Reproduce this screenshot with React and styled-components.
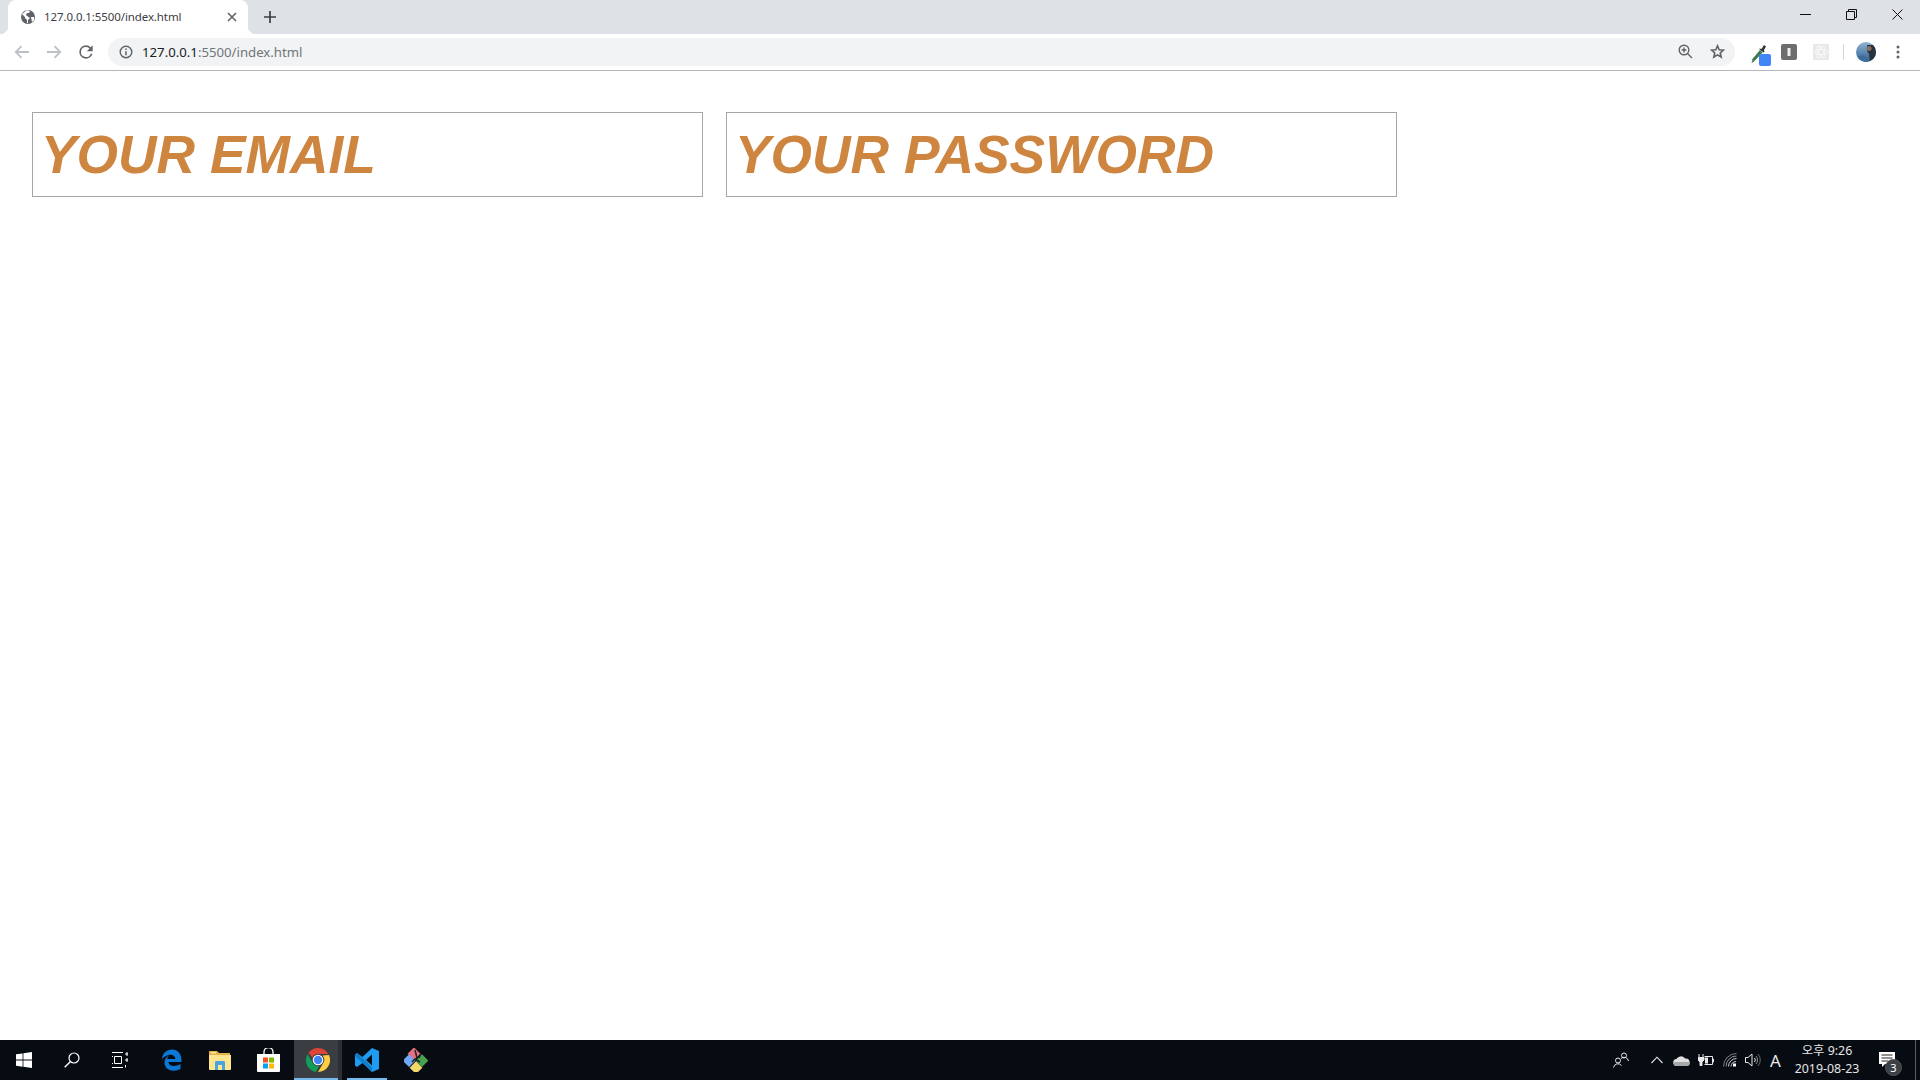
import React from "react";
import styled, { createGlobalStyle } from "styled-components";

const Global = createGlobalStyle`
  html, body { margin: 0; padding: 0; height: 100%; background: #fff; }
  #root { height: 100%; }
  * { box-sizing: border-box; }
`;
const Page = styled.div`
  width: 100%; height: 100vh; display: flex; flex-direction: column; overflow: hidden;
  font-family: "Noto Sans", "Noto Sans CJK KR", sans-serif;
`;
const TabStrip = styled.div`
  height: 34px; flex: none; background: #dee1e6; display: flex; align-items: flex-end; padding-left: 8px;
`;
const Tab = styled.div`
  position: relative; width: 240px; height: 34px; background: #fff; border-radius: 8px 8px 0 0;
  display: flex; align-items: center; padding: 0 11px 0 12px; gap: 8px;
  &::before, &::after { content: ""; position: absolute; bottom: 0; width: 8px; height: 8px; }
  &::before { left: -8px; background: radial-gradient(circle at 0 0, transparent 8px, #fff 8.5px); }
  &::after { right: -8px; background: radial-gradient(circle at 100% 0, transparent 8px, #fff 8.5px); }
`;
const TabTitle = styled.span`
  flex: 1; font-size: 11.5px; line-height: 16px; color: #3c4043; white-space: nowrap; letter-spacing: -0.1px;
`;
const NewTab = styled.div`
  width: 28px; height: 28px; margin-left: 8px; margin-bottom: 3px; display: flex; align-items: center; justify-content: center;
`;
const WindowControls = styled.div`
  margin-left: auto; align-self: flex-start; display: flex;
`;
const WinButton = styled.div`
  width: 46px; height: 29px; display: flex; align-items: center; justify-content: center;
`;
const Toolbar = styled.div`
  height: 37px; flex: none; background: #fff; border-bottom: 1px solid #b6b6b6; display: flex; align-items: center;
  padding: 0 6px 1px 6px;
`;
const NavButton = styled.div`
  width: 32px; height: 28px; display: flex; align-items: center; justify-content: center; flex: none;
`;
const Omnibox = styled.div`
  width: 1627px; height: 28px; margin-left: 6px; border-radius: 14px; background: #f1f3f4; display: flex; align-items: center;
  padding: 0 2px 0 11px; flex: none;
`;
const UrlText = styled.div`
  margin-left: 9px; font-size: 13.2px; color: #70757a; flex: 1; white-space: nowrap;
  b { font-weight: 400; color: #202124; }
`;
const OmniIcon = styled.div`
  width: 32px; height: 24px; display: flex; align-items: center; justify-content: center;
`;
const Extensions = styled.div`
  display: flex; align-items: center; flex: 1; margin-left: 6px;
`;
const ExtButton = styled.div`
  width: 32px; height: 28px; display: flex; flex: none;
  align-items: ${p => (p.$badged ? "flex-end" : "center")};
  justify-content: ${p => (p.$badged ? "flex-end" : "center")};
  padding-right: ${p => (p.$badged ? 2 : 0)}px;
`;
const Divider = styled.div`
  width: 1px; height: 16px; background: #d5d7da; margin: 0 6px;
`;
const Content = styled.main`
  flex: 1; padding: 41px 32px 0; display: flex; align-items: flex-start; gap: 23px; background: #fff;
`;
const Field = styled.input`
  width: 671px; height: 85px; border: 1px solid #a6a6a6; background: #fff; padding: 0 8px; margin: 0; outline: none;
  font: italic 700 53.33px "Liberation Sans", Arial, sans-serif; color: #cd853f;
  &::placeholder { color: #cd853f; opacity: 1; }
`;
const Taskbar = styled.footer`
  height: 40px; flex: none; background: #070b12; display: flex; align-items: stretch; color: #e8e8e8;
`;
const TaskGroup = styled.div`
  display: flex; margin-left: ${p => p.$gap || 0}px; gap: ${p => p.$inner || 0}px;
`;
const TaskButton = styled.div`
  position: relative; width: 48px; height: 40px; display: flex; align-items: center; justify-content: center;
  background: ${p => (p.$active ? "linear-gradient(90deg, #3a3d42 44px, #2b2e33 44px)" : "transparent")};
  &::after {
    content: ""; position: absolute; bottom: 0; height: 2px; background: #76b9ed;
    display: ${p => (p.$open ? "block" : "none")};
    left: ${p => (p.$active ? 0 : 4)}px; right: 4px;
  }
`;
const Tray = styled.div`
  margin-left: auto; display: flex; align-items: center;
`;
const TrayIcon = styled.div`
  width: ${p => p.$w}px; height: 40px; display: flex; align-items: center; justify-content: center; flex: none;
`;
const ImeLetter = styled.span`
  font-size: 17px; font-family: "Noto Sans", sans-serif; color: #e6e6e6;
`;
const Clock = styled.div`
  width: 80px; text-align: center; font-size: 12.4px; line-height: 18px; color: #e6e6e6; white-space: nowrap;
`;
const Notify = styled.div`
  position: relative; width: 48px; height: 40px; display: flex; align-items: center; justify-content: center; padding: 0 8px 2px 0;
`;
const NotifyBadge = styled.span`
  position: absolute; left: 18px; top: 19px; width: 17px; height: 17px; border-radius: 50%;
  background: #3c3f44; border: 1px solid #555; color: #fff; font-size: 11px; line-height: 15px; text-align: center;
`;
const ShowDesktop = styled.div`
  width: 5px; border-left: 1px solid #5a5d62; height: 40px; flex: none;
`;

const Globe = () => (
  <svg width="16" height="16" viewBox="0 0 16 16">
    <circle cx="8" cy="8" r="7" fill="#5f6368" />
    <path d="M2 5l3 3 0 1 2 2 0 3 1 0 0-3 2-2 -3-2 -1-1 1-2 2 0 1-2 -3-1z M11 8l3 0 0 3 -2 2z" fill="#fff" />
  </svg>
);
const CloseX = () => (
  <svg width="10" height="10" viewBox="0 0 10 10"><path d="M1 1l8 8M9 1l-8 8" stroke="#5f6368" strokeWidth="1.6" /></svg>
);
const Plus = () => (
  <svg width="12" height="12" viewBox="0 0 12 12"><path d="M6 0v12M0 6h12" stroke="#3c4043" strokeWidth="1.7" /></svg>
);
const Arrow = ({ flip }) => (
  <svg width="16" height="14" viewBox="0 0 16 14" style={flip ? { transform: "scaleX(-1)" } : undefined}>
    <path d="M15 7H2M7.5 1.2L1.8 7l5.7 5.8" fill="none" stroke="#bdc1c6" strokeWidth="1.8" />
  </svg>
);
const Reload = () => (
  <svg width="20" height="20" viewBox="0 0 24 24">
    <path fill="#5f6368" d="M17.65 6.35A7.96 7.96 0 0 0 12 4a8 8 0 1 0 7.73 10h-2.08A6 6 0 1 1 12 6c1.66 0 3.14.69 4.22 1.78L13 11h7V4z" />
  </svg>
);
const Info = () => (
  <svg width="14" height="14" viewBox="0 0 14 14">
    <circle cx="7" cy="7" r="5.8" fill="none" stroke="#5f6368" strokeWidth="1.4" />
    <path d="M7 6.2v4M7 3.6v1.5" stroke="#5f6368" strokeWidth="1.5" />
  </svg>
);
const Zoom = () => (
  <svg width="15" height="15" viewBox="0 0 15 15">
    <circle cx="6" cy="6" r="4.8" fill="none" stroke="#5f6368" strokeWidth="1.4" />
    <path d="M9.5 9.5l4.5 4.5M3.6 6h4.8M6 3.6v4.8" stroke="#5f6368" strokeWidth="1.4" />
  </svg>
);
const Star = () => (
  <svg width="15" height="15" viewBox="0 0 24 24">
    <path fill="none" stroke="#5f6368" strokeWidth="2.6" d="M12 3l2.7 6.2 6.8.6-5.1 4.5 1.5 6.6L12 17.4 6.1 20.9l1.5-6.6L2.500 9.800l6.800-.6z" />
  </svg>
);
const Dropper = () => (
  <svg width="20" height="22" viewBox="0 0 20 22">
    <path d="M1 15.500L9 6l2.500 2.500L3 17.500z" fill="#3c7a4a" />
    <path d="M.5 19l1-3 1.500 1.500z" fill="#2f6b3c" />
    <path d="M8.500 4.500l2 .5 2.500-4 2 1.500-2 3.500 .5 2-1 .5-4-3z" fill="#333" />
    <rect x="8" y="10" width="12" height="12" rx="2" fill="#4285f4" />
  </svg>
);
const GrayExt = () => (
  <svg width="16" height="16" viewBox="0 0 16 16">
    <rect width="16" height="16" rx="2" fill="#6d6d6d" />
    <rect x="6.500" y="4" width="3" height="8" fill="#eee" />
  </svg>
);
const AtomExt = () => (
  <svg width="16" height="16" viewBox="0 0 16 16">
    <rect width="16" height="16" fill="#e8e8e8" />
    <g fill="none" stroke="#f8f8f8" strokeWidth="1">
      <ellipse cx="8" cy="8" rx="6.500" ry="2.600" />
      <ellipse cx="8" cy="8" rx="6.500" ry="2.600" transform="rotate(60 8 8)" />
      <ellipse cx="8" cy="8" rx="6.500" ry="2.600" transform="rotate(120 8 8)" />
    </g>
  </svg>
);
const Avatar = () => (
  <svg width="20" height="20" viewBox="0 0 20 20">
    <defs>
      <linearGradient id="av" x1="0" y1="0" x2="0" y2="1">
        <stop offset="0" stopColor="#8fb4d6" />
        <stop offset="1" stopColor="#2f5f8f" />
      </linearGradient>
      <clipPath id="avc"><circle cx="10" cy="10" r="10" /></clipPath>
    </defs>
    <g clipPath="url(#avc)">
      <rect width="20" height="20" fill="url(#av)" />
      <path d="M11 3h9v17h-6l-1-8-2-3z" fill="#26323d" />
      <circle cx="13" cy="6.500" r="2.500" fill="#8a6f5f" />
      <path d="M0 15l8-2 6 7H0z" fill="#3e6c9a" />
    </g>
  </svg>
);
const Dots = () => (
  <svg width="4" height="14" viewBox="0 0 4 14">
    <circle cx="2" cy="2" r="1.500" fill="#5f6368" /><circle cx="2" cy="7" r="1.500" fill="#5f6368" /><circle cx="2" cy="12" r="1.500" fill="#5f6368" />
  </svg>
);
const WinMin = () => <svg width="11" height="11" viewBox="0 0 11 11"><path d="M0 5.500h11" stroke="#111" /></svg>;
const WinRestore = () => (
  <svg width="11" height="11" viewBox="0 0 11 11"><path d="M.5 2.500h8v8h-8zM2.500 2.500v-2h8v8h-2" fill="none" stroke="#111" /></svg>
);
const WinClose = () => <svg width="11" height="11" viewBox="0 0 11 11"><path d="M.5.500l10 10M10.500.500l-10 10" stroke="#111" /></svg>;

const WindowsLogo = () => (
  <svg width="16" height="16" viewBox="0 0 16 16"><path fill="#fff" d="M0 2.300l6.600-.9v6.200H0zM7.400 1.300L16 0v7.600H7.400zM0 8.400h6.600v6.300L0 13.800zM7.400 8.400H16V16l-8.600-1.200z" /></svg>
);
const SearchIcon = () => (
  <svg width="16" height="16" viewBox="0 0 16 16"><circle cx="10" cy="6" r="5" fill="none" stroke="#fff" strokeWidth="1.200" /><path d="M6.500 9.500L.7 15.300" stroke="#fff" strokeWidth="1.400" /></svg>
);
const TaskView = () => (
  <svg width="16" height="16" viewBox="0 0 16 16" fill="none" stroke="#fff">
    <path d="M0 .5h11M0 15.500h11M2.500 4.500h7v7h-7z" />
    <path d="M0 4.500h1M0 11.500h1M11 4.500h0M14 1h2v2h-2zM14 7h2v2h-2z" />
    <path d="M13.500 13v2.500" />
  </svg>
);
const EdgeIcon = () => (
  <svg width="21" height="22" viewBox="0 0 21 22">
    <path fill="#0a78d4" d="M1 10C1.500 4 6 .5 11 .5c6 0 9.500 4.500 9.500 11v1.500H7.500c.3 4 6 5.500 12 2v5c-7 3.500-16 1.500-16-6.500 0-3 1.500-5.500 4.500-7-1.200 1.200-1.500 2.300-1.700 3.500h8c0-5-7-6.500-13.800.5z" />
  </svg>
);
const ExplorerIcon = () => (
  <svg width="22" height="20" viewBox="0 0 22 20">
    <path fill="#e3b34a" d="M0 1h8l2 2h11v15H0z" />
    <path fill="#fde68f" d="M0 5h22v14a1 1 0 0 1-1 1H1a1 1 0 0 1-1-1z" />
    <path fill="#4aa4e0" d="M6 19v-7a1 1 0 0 1 1-1h8a1 1 0 0 1 1 1v8h-3v-5H9v5H6z" />
    <rect x="2" y="2" width="5" height="1.500" fill="#fbe89c" />
  </svg>
);
const StoreIcon = () => (
  <svg width="23" height="24" viewBox="0 0 23 24">
    <path d="M7 6V4a4.500 4.500 0 0 1 9 0v2" fill="none" stroke="#fff" strokeWidth="1.300" />
    <path fill="#fff" d="M0 6h23v17a1 1 0 0 1-1 1H1a1 1 0 0 1-1-1z" />
    <rect x="6" y="9.500" width="5" height="5" fill="#f25022" />
    <rect x="12" y="9.500" width="5" height="5" fill="#7fba00" />
    <rect x="6" y="15.500" width="5" height="5" fill="#00a4ef" />
    <rect x="12" y="15.500" width="5" height="5" fill="#ffb900" />
  </svg>
);
const ChromeIcon = () => (
  <svg width="24" height="24" viewBox="0 0 24 24">
    <path fill="#db4437" d="M12 0a12 12 0 0 1 10.400 6H12a6 6 0 0 0-5.600 3.700L2.500 4.700A12 12 0 0 1 12 0z" />
    <path fill="#0f9d58" d="M1.600 6l5 8.700A6 6 0 0 0 13 17.900L10 24A12 12 0 0 1 1.600 6z" />
    <path fill="#ffcd40" d="M23 7a12 12 0 0 1-11 17l5.200-9a6 6 0 0 0-.8-7.500z" />
    <circle cx="12" cy="12" r="5.300" fill="#fff" />
    <circle cx="12" cy="12" r="4.200" fill="#4285f4" />
  </svg>
);
const VSCodeIcon = () => (
  <svg width="24" height="24" viewBox="0 0 24 24">
    <path fill="#1f9cf0" d="M17 0l7 3v18l-7 3-9.500-9L2 19 0 17.500v-11L2 5l5.500 4zm0 6.500L11 12l6 5.500z" />
    <path fill="#0b6fb5" d="M17 0L2 13.500l0 0L7.500 9 17 0zM0 6.500L2 5l15 14v5L0 8z" opacity=".7" />
  </svg>
);
const GitKrakenIcon = () => (
  <svg width="24" height="24" viewBox="0 0 24 24">
    <rect x="6" y="1" width="9" height="9" transform="rotate(45 10 5)" fill="#e8707e" />
    <rect x="1" y="8" width="9" height="9" transform="rotate(45 5 12)" fill="#6fa8f5" />
    <rect x="14" y="8" width="9" height="9" transform="rotate(45 18 12)" fill="#47a24f" />
    <rect x="8" y="15" width="9" height="9" transform="rotate(45 12 19)" fill="#f3d869" />
    <path d="M11 2l2 8M17 5l-2 5M8 14l3-3 5 3" stroke="#20242a" strokeWidth="1.500" fill="none" />
  </svg>
);
const PeopleIcon = () => (
  <svg width="16" height="16" viewBox="0 0 16 16" fill="none" stroke="#e8e8e8">
    <circle cx="5" cy="8.500" r="2.500" /><path d="M.5 15.500a4.500 4.500 0 0 1 8 -2" />
    <circle cx="11" cy="3.500" r="2.500" /><path d="M8 6.500a4.500 4.500 0 0 1 7.500 2.500" />
  </svg>
);
const Chevron = () => <svg width="12" height="8" viewBox="0 0 12 8"><path d="M.5 7L6 1.200 11.500 7" fill="none" stroke="#e8e8e8" strokeWidth="1.100" /></svg>;
const Cloud = () => (
  <svg width="17" height="11" viewBox="0 0 17 11">
    <path fill="#e0e0e0" d="M4 11a3.500 3.500 0 0 1-.5-7A5 5 0 0 1 12 3.500 3.700 3.700 0 0 1 13.500 11z" />
    <path fill="#a8a8a8" d="M0 7h17c.2 2.500-1.200 4-3.500 4H4C2 11 .3 9.500 0 7z" />
  </svg>
);
const Battery = () => (
  <svg width="16" height="12" viewBox="0 0 16 12" fill="none" stroke="#e8e8e8">
    <path d="M6.500 2.500h8v8h-8M14.500 5h1v3h-1" />
    <path d="M1 0v3M5 0v3M0 3.500h6v2.500l-2 2v3.500h-2V8L0 6z" fill="#e8e8e8" />
    <rect x="7" y="3.500" width="3" height="6" fill="#e8e8e8" stroke="none" />
  </svg>
);
const Wifi = () => (
  <svg width="14" height="14" viewBox="0 0 14 14" fill="none" stroke="#d0d0d0">
    <path d="M.5 13.500A13 13 0 0 1 13.500.500" strokeOpacity=".6" /><path d="M3 13.500A10.500 10.500 0 0 1 13.500 3" strokeOpacity=".7" />
    <path d="M5.500 13.500a8 8 0 0 1 8-8M8 13.500a5.500 5.500 0 0 1 5-5" />
    <rect x="10" y="10.500" width="3" height="3" fill="#fff" stroke="none" />
  </svg>
);
const Speaker = () => (
  <svg width="16" height="14" viewBox="0 0 16 14" fill="none" stroke="#e8e8e8">
    <path d="M.5 4.500h2.500L7 1v12L3 9.500H.5z" />
    <path d="M9.500 5a3 3 0 0 1 0 4" /><path d="M11 3a6 6 0 0 1 0 8" strokeOpacity=".6" /><path d="M13 1a9 9 0 0 1 0 12" strokeOpacity=".4" />
  </svg>
);
const NoteIcon = () => (
  <svg width="16" height="15" viewBox="0 0 16 15">
    <path fill="#fff" d="M0 0h16v12H6l-3 3v-3H0z" />
    <path d="M2.500 3h11M2.500 6h11M2.500 9h7" stroke="#222" />
  </svg>
);

export default function App() {
  return (
    <Page>
      <Global />
      <TabStrip>
        <Tab>
          <Globe />
          <TabTitle>127.0.0.1:5500/index.html</TabTitle>
          <CloseX />
        </Tab>
        <NewTab><Plus /></NewTab>
        <WindowControls>
          <WinButton><WinMin /></WinButton>
          <WinButton><WinRestore /></WinButton>
          <WinButton><WinClose /></WinButton>
        </WindowControls>
      </TabStrip>
      <Toolbar>
        <NavButton><Arrow /></NavButton>
        <NavButton><Arrow flip /></NavButton>
        <NavButton><Reload /></NavButton>
        <Omnibox>
          <Info />
          <UrlText><b>127.0.0.1</b>:5500/index.html</UrlText>
          <OmniIcon><Zoom /></OmniIcon>
          <OmniIcon><Star /></OmniIcon>
        </Omnibox>
        <Extensions>
          <ExtButton $badged><Dropper /></ExtButton>
          <ExtButton><GrayExt /></ExtButton>
          <ExtButton><AtomExt /></ExtButton>
          <Divider />
          <ExtButton><Avatar /></ExtButton>
          <ExtButton><Dots /></ExtButton>
        </Extensions>
      </Toolbar>
      <Content>
        <Field type="text" placeholder="YOUR EMAIL" />
        <Field type="text" placeholder="YOUR PASSWORD" />
      </Content>
      <Taskbar>
        <TaskGroup>
          <TaskButton><WindowsLogo /></TaskButton>
          <TaskButton><SearchIcon /></TaskButton>
          <TaskButton><TaskView /></TaskButton>
        </TaskGroup>
        <TaskGroup $gap={3}>
          <TaskButton><EdgeIcon /></TaskButton>
          <TaskGroup $gap={1}>
            <TaskButton><ExplorerIcon /></TaskButton>
            <TaskButton><StoreIcon /></TaskButton>
          </TaskGroup>
        </TaskGroup>
        <TaskGroup $gap={2} $inner={1}>
          <TaskButton $active $open><ChromeIcon /></TaskButton>
          <TaskButton $open><VSCodeIcon /></TaskButton>
          <TaskButton><GitKrakenIcon /></TaskButton>
        </TaskGroup>
        <Tray>
          <TrayIcon $w={24}><PeopleIcon /></TrayIcon>
          <TrayIcon $w={12} />
          <TrayIcon $w={24}><Chevron /></TrayIcon>
          <TrayIcon $w={24}><Cloud /></TrayIcon>
          <TrayIcon $w={25}><Battery /></TrayIcon>
          <TrayIcon $w={23}><Wifi /></TrayIcon>
          <TrayIcon $w={23}><Speaker /></TrayIcon>
          <TrayIcon $w={23}><ImeLetter>A</ImeLetter></TrayIcon>
          <Clock>
            <div>오후 9:26</div>
            <div>2019-08-23</div>
          </Clock>
          <Notify>
            <NoteIcon />
            <NotifyBadge>3</NotifyBadge>
          </Notify>
          <ShowDesktop />
        </Tray>
      </Taskbar>
    </Page>
  );
}
